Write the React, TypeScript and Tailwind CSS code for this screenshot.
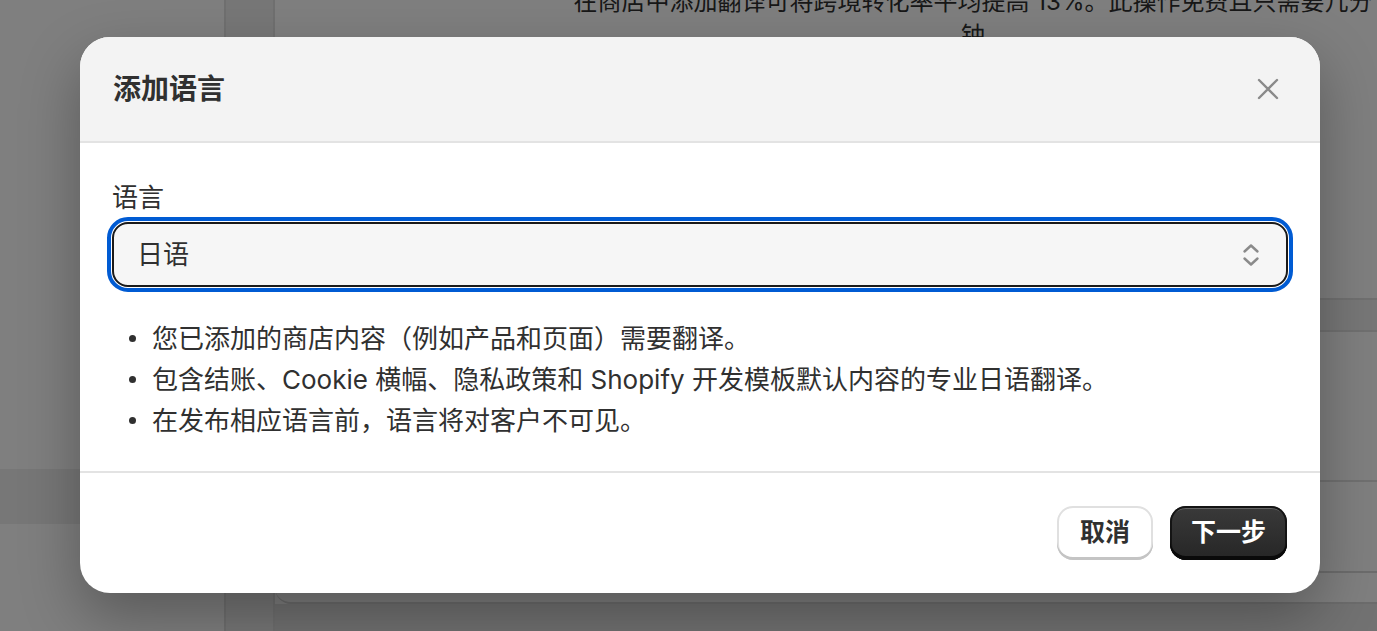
import React from "react";

const bullets = [
  "您已添加的商店内容（例如产品和页面）需要翻译。",
  "包含结账、Cookie 横幅、隐私政策和 Shopify 开发模板默认内容的专业日语翻译。",
  "在发布相应语言前，语言将对客户不可见。",
];

function CloseIcon() {
  return (
    <svg width="22" height="22" viewBox="0 0 22 22" fill="none">
      <path d="M2 2L20 20M20 2L2 20" stroke="#8a8a8a" strokeWidth="2.4" strokeLinecap="round" />
    </svg>
  );
}

function SelectIcon() {
  return (
    <svg width="18" height="28" viewBox="0 0 18 28" fill="none">
      <path d="M2.5 10.5L9 4.5L15.5 10.5" stroke="#8a8a8a" strokeWidth="2.4" strokeLinecap="round" strokeLinejoin="round" />
      <path d="M2.5 17.5L9 23.5L15.5 17.5" stroke="#8a8a8a" strokeWidth="2.4" strokeLinecap="round" strokeLinejoin="round" />
    </svg>
  );
}

function BackgroundPage() {
  return (
    <div className="flex h-[631px] w-full">
      {/* sidebar */}
      <div className="flex w-[226px] flex-col border-r-2 border-[#e0e0e0] bg-white">
        <div className="h-[469px]" />
        <div className="h-[55px] bg-[#eeeeee]" />
      </div>
      <div className="w-[49px] border-r-2 border-[#e0e0e0] bg-[#eeeeee]" />
      {/* main */}
      <div className="flex flex-1 flex-col">
        <div className="h-[298px] bg-white">
          <div className="ml-[298px] mt-[-15px] w-[800px] text-center text-[24px] leading-[34px] text-[#303030]">
            在商店中添加翻译可将跨境转化率平均提高 13%。此操作免费且只需要几分钟
          </div>
        </div>
        <div className="h-[34px] border-y-2 border-[#e0e0e0] bg-[#eeeeee]" />
        <div className="h-[148px] bg-white" />
        <div className="h-[91px] border-t-2 border-[#e0e0e0] bg-white" />
        <div className="h-[33px] rounded-bl-[16px] border-y-2 border-[#d8d8d8] bg-white" />
        <div className="flex-1 bg-[#e4e4e4]" />
      </div>
    </div>
  );
}

export default function App() {
  return (
    <div className="relative h-[631px] w-[1377px] overflow-hidden font-['Inter','Noto_Sans_CJK_SC',sans-serif]">
      <BackgroundPage />

      <div className="absolute inset-0 bg-black/50 pl-[80px] pt-[37px]">
        <div className="w-[1240px] overflow-hidden rounded-[30px] bg-white shadow-[0_24px_60px_rgba(0,0,0,0.3)]">
          {/* header */}
          <div className="flex h-[106px] items-center justify-between border-b-2 border-[#e3e3e3] bg-[#f3f3f3] pl-[33px] pr-[41px]">
            <h2 className="text-[28px] font-bold leading-[40px] text-[#303030]">添加语言</h2>
            <button className="flex h-[22px] w-[22px] items-center justify-center">
              <CloseIcon />
            </button>
          </div>

          {/* body */}
          <div className="px-[32px] pb-[30px] pt-[35px]">
            <label className="block text-[26px] leading-[40px] text-[#303030]">语言</label>
            <div className="mt-[4px] flex h-[65px] items-center justify-between rounded-[16px] border-2 border-[#1a1a1a] bg-[#f6f6f6] pl-[23px] pr-[26px] outline-4 outline-offset-[1px] outline-[#005bd3]">
              <span className="text-[26px] text-[#303030]">日语</span>
              <SelectIcon />
            </div>

            <ul className="mt-[31px]">
              {bullets.map((b) => (
                <li key={b} className="flex h-[41px] items-center pl-[17px] text-[26px] text-[#303030]">
                  <span className="mr-[16px] h-[7px] w-[7px] shrink-0 rounded-full bg-[#303030]" />
                  {b}
                </li>
              ))}
            </ul>
          </div>

          {/* footer */}
          <div className="flex h-[122px] items-center justify-end gap-[17px] border-t-2 border-[#e3e3e3] pr-[33px]">
            <button className="h-[54px] rounded-[16px] bg-white px-[23px] text-[25px] font-bold text-[#303030] shadow-[inset_0_-3px_0_#c4c4c4,inset_0_0_0_2px_#e0e0e0]">
              取消
            </button>
            <button className="h-[54px] rounded-[16px] bg-gradient-to-b from-[#3a3a3a] to-[#262626] px-[21px] text-[25px] font-bold text-white shadow-[inset_0_-4px_0_#0a0a0a,inset_0_0_0_2px_#141414,inset_0_4px_0_-1px_rgba(255,255,255,0.22)]">
              下一步
            </button>
          </div>
        </div>
      </div>
    </div>
  );
}
